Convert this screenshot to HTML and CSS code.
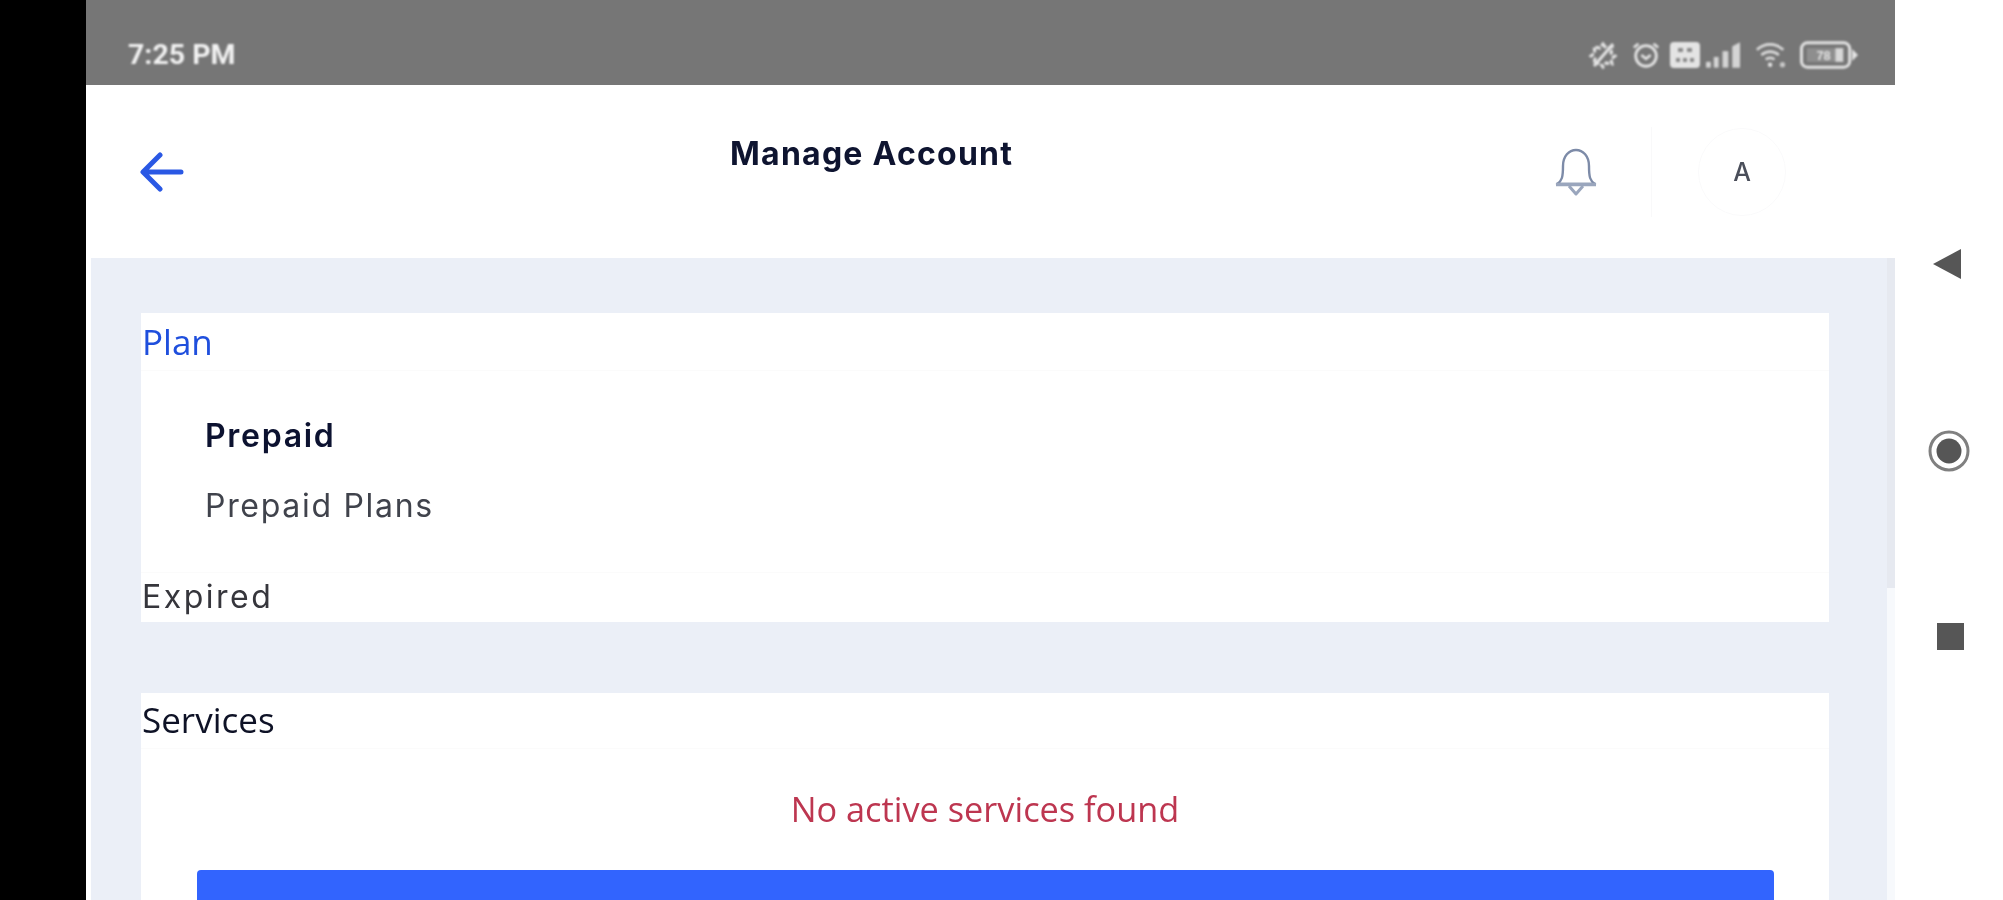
FILE: index.html
```html
<!DOCTYPE html>
<html lang="en">
<head>
<meta charset="utf-8">
<title>Manage Account</title>
<link rel="stylesheet" href="styles.css">
</head>
<body>
<div class="device">
  <div class="bezel"></div>
  <div class="screen">
    <div class="status">
      <span class="time">7:25 PM</span>
      <div class="status-icons">
        <svg class="si" width="30" height="30" viewBox="0 0 30 30" fill="none" stroke="#e4e4e4" stroke-width="3"><path d="M15 4l3 4 6-1-1 6 4 3-4 3 1 5-6-1-3 4-3-4-6 1 1-5-4-3 4-3-1-6 6 1z" stroke-dasharray="5 2"/><path d="M6 26L25 4"/></svg>
        <svg class="si alarm" width="30" height="30" viewBox="0 0 32 30" fill="none" stroke="#e4e4e4" stroke-width="3"><circle cx="16" cy="16" r="11"/><path d="M11 15l5 4 5-4M3 7l5-4M29 7l-5-4"/></svg>
        <svg class="si sim" width="30" height="26" viewBox="0 0 30 26"><rect width="30" height="26" rx="4" fill="#e4e4e4"/><path d="M8 6h5v4H8zM17 6h5v4h-5zM6 16h4v4H6zM13 16h4v4h-4zM20 16h4v4h-4z" fill="#8a8a8a"/></svg>
        <svg class="si sig" width="35" height="26" viewBox="0 0 36 26" fill="#d4d4d4"><rect x="0" y="20" width="5" height="6"/><rect x="8" y="15" width="5" height="11"/><rect x="17" y="9" width="6" height="17"/><path d="M27 4l8-4v26h-8z"/></svg>
        <svg class="si wifi" width="30" height="26" viewBox="0 0 34 28" fill="none" stroke="#dcdcdc" stroke-width="3"><path d="M1 8c9-8 21-8 30 0M6 14c6-5 14-5 20 0M11 19c3-2 7-2 10 0"/><circle cx="16" cy="25" r="2.500" fill="#e4e4e4" stroke="none"/><circle cx="30" cy="25" r="3" fill="#c8c8c8" stroke="none"/></svg>
        <svg class="si batt" width="59" height="28" viewBox="0 0 60 28"><rect x="1.500" y="1.500" width="49" height="25" rx="6" fill="none" stroke="#e4e4e4" stroke-width="3"/><rect x="7" y="7" width="37" height="14" fill="#8e8e8e"/><rect x="36" y="7" width="8" height="14" fill="#d8d8d8"/><path d="M53 8l6 6-6 6z" fill="#e4e4e4"/><text x="24" y="19" font-size="13" font-family="Liberation Sans" font-weight="700" fill="#e4e4e4" text-anchor="middle">78</text></svg>
      </div>
    </div>
    <header class="topbar">
      <svg class="back" width="44" height="40" viewBox="0 0 44 40" fill="none" stroke="#2a58e4" stroke-width="5" stroke-linecap="round" stroke-linejoin="round"><path d="M41 20H4M20 3L3 20l17 17"/></svg>
      <h1 class="title">Manage Account</h1>
      <svg class="bell" width="42" height="48" viewBox="0 0 42 48" fill="none" stroke="#7d8ba8" stroke-width="2.400" stroke-linejoin="round"><path d="M2 36c5-3 6-7 6-18C8 8 14 2 21 2s13 6 13 16c0 11 1 15 6 18z"/><path d="M1 36.500h40" stroke="#9aa6bd" stroke-width="3.500"/><path d="M14 38l7 8 7-8" stroke="#9aa6bd" stroke-width="3"/></svg>
      <div class="vline"></div>
      <div class="avatar">A</div>
    </header>
    <div class="body-row">
      <main class="content">
        <section class="card plan">
          <div class="card-head plan-head">Plan</div>
          <div class="plan-body">
            <div class="plan-name">Prepaid</div>
            <div class="plan-sub">Prepaid Plans</div>
          </div>
          <div class="plan-foot">Expired</div>
        </section>
        <section class="card services">
          <div class="card-head services-head">Services</div>
          <div class="empty">No active services found</div>
          <div class="action"></div>
        </section>
      </main>
      <div class="scroll"><div class="thumb"></div></div>
    </div>
  </div>
  <nav class="softkeys">
    <svg class="key-back" width="28" height="30" viewBox="0 0 28 30"><path d="M28 0v30L0 15z" fill="#565656"/></svg>
    <svg class="key-home" width="42" height="42" viewBox="0 0 42 42"><circle cx="21" cy="21" r="19" fill="none" stroke="#808080" stroke-width="3"/><circle cx="21" cy="21" r="12.500" fill="#565656"/></svg>
    <div class="key-recent"></div>
  </nav>
</div>
</body>
</html>
```
FILE: styles.css
```css
* { box-sizing: border-box; }
html, body { margin: 0; height: 900px; overflow: hidden; background: #fff; }
.device { display: flex; height: 900px; font-family: "Open Sans", sans-serif; }
.bezel { flex: 0 0 86px; background: #000; }
.screen { flex: 0 0 1809px; display: flex; flex-direction: column; height: 900px; overflow: hidden; background: #fff; }

.status { flex: 0 0 85px; background: #767676; display: flex; align-items: flex-end; justify-content: space-between; padding: 0 36px 15px 42px; }
.time { font: 700 28.500px/30px "Roboto", sans-serif; color: #f2f2f2; filter: blur(.8px); }
.status-icons { display: flex; align-items: center; filter: blur(.9px); }
.alarm { margin-left: 13px; }
.sim { margin-left: 9px; }
.sig { margin-left: 6px; }
.wifi { margin-left: 15px; margin-right: 2px; }
.batt { margin-left: 12px; }

.topbar { flex: 0 0 173px; display: flex; align-items: center; padding: 0 0 0 54px; }
.back { flex: none; filter: blur(.7px); }
.title { flex: none; margin: -36px 0 0 546px; font: 700 32px/40px "Inter", sans-serif; color: #0e1430; letter-spacing: 1.250px; filter: blur(.7px); width: 284px; white-space: nowrap; }
.bell { flex: none; margin-left: 541px; filter: blur(.6px); }
.vline { flex: none; width: 1px; height: 90px; margin-left: 54px; background: #f9f9fa; }
.avatar { flex: none; width: 88px; height: 88px; margin-left: 46px; padding-top: 2px; border-radius: 50%; border: 1px solid #fafafb; display: flex; align-items: center; justify-content: center; font: 500 25px/1 "Inter", sans-serif; color: #4a4e5a; filter: blur(.7px); }

.body-row { flex: 1; display: flex; padding-left: 5px; min-height: 0; }
.content { flex: 1; background: #ebeff7; padding: 55px 58px 0 50px; overflow: hidden; }
.scroll { flex: 0 0 8px; background: #f7f9fc; }
.thumb { height: 330px; background: #e6e9f0; }

.card { background: #fff; }
.card-head { font-size: 35px; font-weight: 500; line-height: 40px; }
.plan { height: 309px; display: flex; flex-direction: column; }
.plan-head { height: 58px; padding: 9px 0 0 1px; color: #1f4fdd; border-bottom: 1px solid #fbfbfb; filter: blur(.7px); }
.plan-body { flex: 1; padding: 45px 0 0 64px; }
.plan-name { font: 600 32px/40px "Inter", sans-serif; color: #0c1230; letter-spacing: 1.700px; filter: blur(.7px); }
.plan-sub { margin-top: 30px; font: 400 32px/40px "Inter", sans-serif; color: #40434c; letter-spacing: 1.700px; filter: blur(.7px); }
.plan-foot { height: 50px; padding: 4px 0 0 1px; font: 400 32px/40px "Inter", sans-serif; color: #36363c; letter-spacing: 2.500px; border-top: 1px solid #fbfbfb; filter: blur(.7px); white-space: nowrap; }

.services { margin-top: 71px; height: 400px; display: flex; flex-direction: column; }
.services-head { height: 56px; padding: 7px 0 0 1px; color: #0e1226; border-bottom: 1px solid #fbfbfb; filter: blur(.7px); }
.empty { margin-top: 40px; text-align: center; font-size: 34.300px; line-height: 40px; color: #bd3650; filter: blur(.7px); }
.action { margin: 41px 55px 0 56px; height: 80px; background: #3264fe; border-radius: 4px; }

.softkeys { flex: 1; position: relative; }
.softkeys svg, .key-recent { position: absolute; filter: blur(.7px); }
.key-back { left: 38px; top: 249px; }
.key-home { left: 33px; top: 430px; }
.key-recent { left: 42px; top: 623px; width: 27px; height: 27px; background: #565656; }
```
